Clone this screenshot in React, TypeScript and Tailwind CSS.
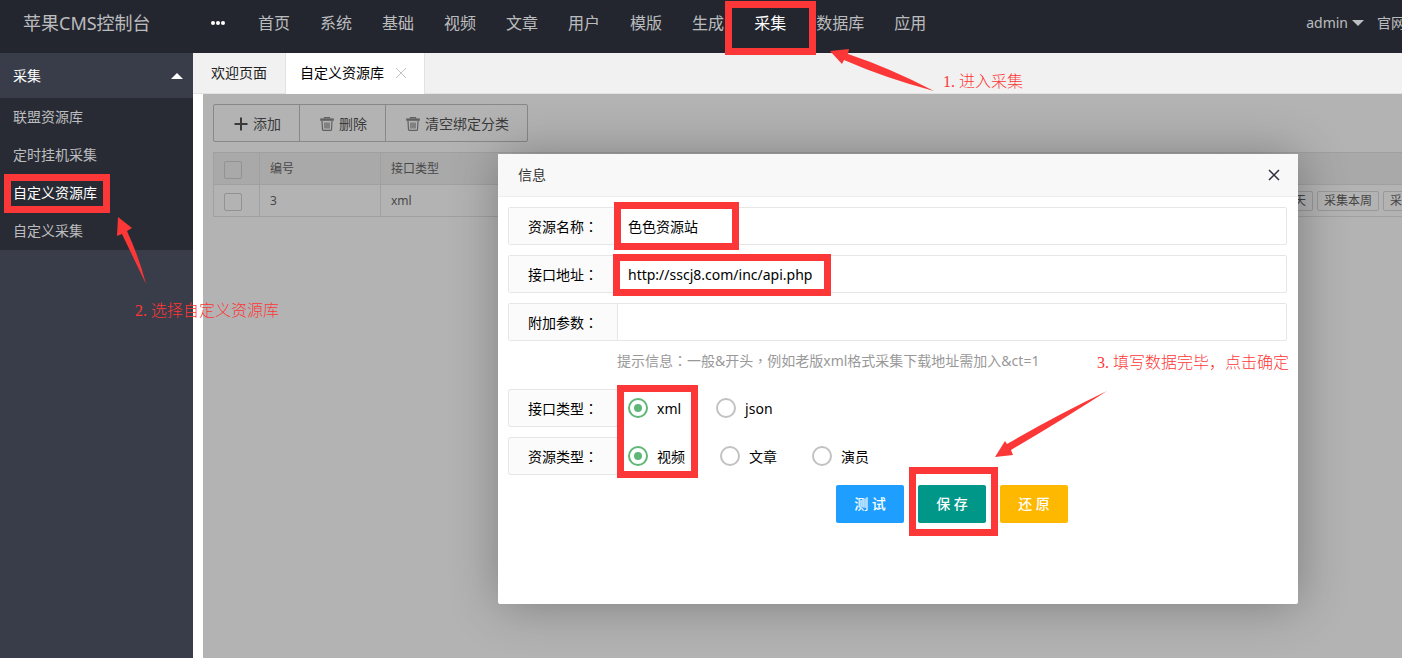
import { useState } from 'react';
import type { ReactNode } from 'react';

const NAV_ITEMS = ['首页', '系统', '基础', '视频', '文章', '用户', '模版', '生成', '采集', '数据库', '应用'];
const MENU_ITEMS = ['联盟资源库', '定时挂机采集', '自定义资源库', '自定义采集'];

function TrashIcon() {
	return (
		<svg className="w-4 h-4 shrink-0 text-[#606060]" viewBox="0 0 16 16" fill="none" stroke="currentColor" strokeWidth="1.2" aria-hidden="true">
			<path d="M5.500 2.500V1.600h5v.9" />
			<path d="M1.200 3.600h13.600" strokeWidth="2.400" />
			<path d="M3 5l.5 8.400q.1 1 1.100 1h6.800q1 0 1.100-1L13 5" />
			<path d="M6 6.500v6M8 6.500v6M10 6.500v6" />
		</svg>
	);
}

function PlusIcon() {
	return (
		<svg className="w-4 h-4 shrink-0" viewBox="0 0 16 16" stroke="currentColor" strokeWidth="2" aria-hidden="true">
			<path d="M8 1.500v13M1.500 8h13" />
		</svg>
	);
}

function CloseIcon({ className }: { className: string }) {
	return (
		<svg className={className} viewBox="0 0 12 12" stroke="currentColor" fill="none" aria-hidden="true">
			<path d="M1 1l10 10M11 1L1 11" />
		</svg>
	);
}

/* Punctuation centred in its square */
function Punct({ children }: { children: ReactNode }) {
	return <span className="font-['Noto_Sans_CJK_TC',sans-serif]" lang="zh-Hant">{children}</span>;
}

/* Red frame laid over a control to point it out */
function Mark({ className }: { className: string }) {
	return <span className={`absolute z-20 border-[7px] border-[#fc3737] pointer-events-none ${className}`} />;
}

function Header() {
	return (
		<header className="flex items-center h-[53px] pb-2 bg-[#23262e] text-white/70 whitespace-nowrap">
			<div className="w-[193px] shrink-0 pl-[23px] text-lg">苹果CMS控制台</div>
			<button className="w-[50px] h-8 shrink-0 flex items-center justify-center gap-px" aria-label="更多">
				<span className="size-1 rounded-full bg-white" />
				<span className="size-1 rounded-full bg-white" />
				<span className="size-1 rounded-full bg-white" />
			</button>
			<nav className="flex text-base">
				{NAV_ITEMS.map((item) => (
					<a key={item} href="#" className={`relative px-[15px] ${item === '采集' ? 'text-white' : ''}`}>
						{item}
						{item === '采集' && <Mark className="left-[-14px] -top-[10px] w-[91px] h-[54px]" />}
					</a>
				))}
			</nav>
			<div className="ml-auto flex shrink-0 text-sm -mr-[31px]">
				<button className="flex items-center gap-1 mr-[13px]">
					admin
					<span className="border-x-[6px] border-t-[6px] border-x-transparent border-t-white/70" />
				</button>
				<a href="#">官网首页</a>
			</div>
		</header>
	);
}

function Sidebar() {
	return (
		<aside className="w-[193px] shrink-0 bg-[#393d49] text-sm">
			<button className="flex items-center justify-between w-full h-[45px] pl-[13px] pr-2.5 text-white">
				采集
				<span className="border-x-[6px] border-b-[6px] border-x-transparent border-b-white" />
			</button>
			<ul className="bg-[#282b33]">
				{MENU_ITEMS.map((item) => (
					<li key={item} className="relative">
						<a href="#" className={`block h-[38px] leading-[38px] pl-[13px] ${item === '自定义资源库' ? 'text-white' : 'text-white/70'}`}>
							{item}
						</a>
						{item === '自定义资源库' && <Mark className="left-1 top-0 w-[106px] h-[39px]" />}
					</li>
				))}
			</ul>
		</aside>
	);
}

function Toolbar() {
	return (
		<div className="inline-flex h-[38px] border border-[#888] rounded-xs divide-x divide-[#888] text-sm text-[#3a3a3a]">
			<button className="flex items-center gap-1 pt-0.5 pl-[19px] pr-[18px]">
				<PlusIcon />添加
			</button>
			<button className="flex items-center gap-1 pt-0.5 pl-[19px] pr-[18px]">
				<TrashIcon />删除
			</button>
			<button className="flex items-center gap-1 pt-0.5 pl-[19px] pr-[18px]">
				<TrashIcon />清空绑定分类
			</button>
		</div>
	);
}

function Check({ label }: { label: string }) {
	return <input type="checkbox" aria-label={label} className="block appearance-none size-[18px] ml-2.5 mt-[3px] border border-[#929292] rounded-xs" />;
}

function SmallButton({ children }: { children: ReactNode }) {
	return <button className="h-5 px-1.5 mr-1 border border-[#999] rounded-xs text-xs text-[#444]">{children}</button>;
}

function SourceTable() {
	return (
		<table className="w-[1370px] mt-2.5 table-fixed border-collapse text-xs text-[#484848] [&_td]:border [&_td]:border-[#a0a0a0] [&_th]:border [&_th]:border-[#a0a0a0] [&_th]:font-normal [&_th]:text-left">
			<colgroup>
				<col className="w-[46px]" />
				<col className="w-[121px]" />
				<col className="w-[242px]" />
				<col className="w-[594px]" />
				<col />
			</colgroup>
			<thead>
				<tr className="h-8 bg-[#a9a9a9]">
					<th><Check label="全选" /></th>
					<th className="pl-2.5">编号</th>
					<th className="pl-2.5">接口类型</th>
					<th className="pl-2.5">资源名称</th>
					<th className="pl-[57px]">采集</th>
				</tr>
			</thead>
			<tbody>
				<tr className="h-8">
					<td><Check label="选择 3" /></td>
					<td className="pl-2.5">3</td>
					<td className="pl-2.5">xml</td>
					<td className="pl-2.5">色色资源站</td>
					<td className="pl-[34px] whitespace-nowrap">
						<SmallButton>采集当天</SmallButton>
						<SmallButton>采集本周</SmallButton>
						<SmallButton>采集所有</SmallButton>
					</td>
				</tr>
			</tbody>
		</table>
	);
}

type FieldProps = { id: string; label: string; defaultValue?: string; mark?: string };

function TextField({ id, label, defaultValue, mark }: FieldProps) {
	return (
		<div className="relative flex h-[38px] mb-2.5 border border-[#e6e6e6] rounded-xs">
			<label htmlFor={id} className="w-[109px] shrink-0 pl-[19px] leading-9 bg-[#fbfbfb] border-r border-[#e6e6e6]">
				{label}<Punct>：</Punct>
			</label>
			<input id={id} type="text" defaultValue={defaultValue} className="flex-1 min-w-0 pl-2.5 pt-0.5 outline-none" />
			{mark && <Mark className={mark} />}
		</div>
	);
}

type RadioProps = { name: string; label: string; options: string[]; children?: ReactNode };

function RadioField({ name, label, options, children }: RadioProps) {
	const [value, setValue] = useState(options[0]);

	return (
		<div role="radiogroup" aria-labelledby={`${name}-label`} className="relative flex mb-2.5">
			<span id={`${name}-label`} className="w-[110px] h-[38px] pl-[19px] leading-9 shrink-0 border border-[#e6e6e6] rounded-xs bg-[#fbfbfb]">
				{label}<Punct>：</Punct>
			</span>
			<div className="flex items-center gap-[35px] pl-2.5">
				{options.map((option) => (
					<label key={option} className="flex items-center gap-[9px]">
						<input
							type="radio"
							name={name}
							checked={value === option}
							onChange={() => setValue(option)}
							className="appearance-none size-5 grid place-content-center rounded-full border-2 border-[#c2c2c2] checked:border-[#5fb878] checked:before:block checked:before:size-2 checked:before:rounded-full checked:before:bg-[#5fb878]"
						/>
						<span className="pt-0.5">{option}</span>
					</label>
				))}
			</div>
			{children}
		</div>
	);
}

function Dialog() {
	return (
		<div role="dialog" aria-label="信息" className="absolute left-[295px] top-[60px] w-[800px] h-[450px] bg-white rounded-xs shadow-[1px_1px_50px_rgba(0,0,0,0.3)] text-sm text-black">
			<div className="flex items-center justify-between h-[43px] pl-5 pr-[18px] border-b border-[#eee] bg-[#f8f8f8] text-[#333]">
				<h2>信息</h2>
				<button aria-label="关闭"><CloseIcon className="size-3 stroke-[1.500] text-[#2e2d3c]" /></button>
			</div>
			<form className="pt-2.5 pl-2.5 pr-[11px]">
				<TextField id="name" label="资源名称" defaultValue="色色资源站" mark="left-[105px] -top-1.5 w-[125px] h-12" />
				<TextField id="url" label="接口地址" defaultValue="http://sscj8.com/inc/api.php" mark="left-[104px] -top-[2px] w-[218px] h-[42px]" />
				<TextField id="param" label="附加参数" />
				<p className="ml-[109px] h-[38px] leading-[18px] text-[#999]">
					提示信息<Punct>：</Punct>一般&开头<Punct>，</Punct>例如老版xml格式采集下载地址需加入&ct=1
				</p>
				<RadioField name="type" label="接口类型" options={['xml', 'json']}>
					<Mark className="left-[109px] -top-1 w-[81px] h-[93px]" />
				</RadioField>
				<RadioField name="mid" label="资源类型" options={['视频', '文章', '演员']} />
				<div className="flex justify-center gap-3.5 ml-[109px] font-medium text-white">
					<button type="button" className="w-[68px] h-[38px] rounded-xs bg-[#1e9fff]">测 试</button>
					<div className="relative">
						<button type="submit" className="w-[68px] h-[38px] rounded-xs bg-[#009688]">保 存</button>
						<Mark className="-left-[9px] -top-[18px] w-[89px] h-[69px]" />
					</div>
					<button type="reset" className="w-[68px] h-[38px] rounded-xs bg-[#ffb800]">还 原</button>
				</div>
			</form>
		</div>
	);
}

function Note({ step, className, children }: { step: number; className: string; children: ReactNode }) {
	return (
		<p className={`absolute flex ${className}`}>
			<span className="w-4">{step}.</span>
			{children}
		</p>
	);
}

function Notes() {
	return (
		<div className="absolute inset-0 z-30 pointer-events-none text-base leading-4 text-[#fc3737] whitespace-nowrap font-['Liberation_Serif','Noto_Sans_CJK_SC',serif] font-light">
			<svg className="absolute left-0 top-0 w-full h-full" fill="currentColor" aria-hidden="true">
				<path d="M830 51L849 49L848 54Q890 68 934 91Q885 78 844 60L842 64Z" />
				<path d="M118 217L132 228L127 231Q139 257 146 284Q134 259 122 234L117 236Z" />
				<path d="M995 457L1005 441L1007 444Q1055 416 1107 391Q1062 420 1011 450L1013 455Z" />
			</svg>
			<Note step={1} className="left-[943px] top-[74px]">进入采集</Note>
			<Note step={2} className="left-[135px] top-[303px]">选择自定义资源库</Note>
			<Note step={3} className="left-[1097px] top-[355px]">填写数据完毕，点击确定</Note>
		</div>
	);
}

export default function App() {
	return (
		<div className="relative flex flex-col min-h-screen overflow-hidden bg-white font-['Noto_Sans','Noto_Sans_CJK_SC',sans-serif]">
			<Header />
			<div className="flex flex-1">
				<Sidebar />
				<main className="flex flex-col flex-1 min-w-0">
					<div className="flex h-[41px] bg-[#f1f1f1] border-b border-[#e2e2e2] text-sm text-black">
						<button className="px-[18px] border-r border-[#e2e2e2] text-[#222]">欢迎页面</button>
						<div className="flex items-center h-[41px] pb-0.5 pl-3.5 pr-[17px] border-r border-[#e2e2e2] bg-white">
							自定义资源库
							<button aria-label="关闭标签" className="ml-[11px]"><CloseIcon className="size-3 text-[#c2c2c2]" /></button>
						</div>
					</div>
					<div className="relative flex-1 ml-2.5 pt-2.5 pl-2.5 bg-[#b3b3b3] overflow-hidden">
						<Toolbar />
						<SourceTable />
						<Dialog />
					</div>
				</main>
			</div>
			<Notes />
		</div>
	);
}
